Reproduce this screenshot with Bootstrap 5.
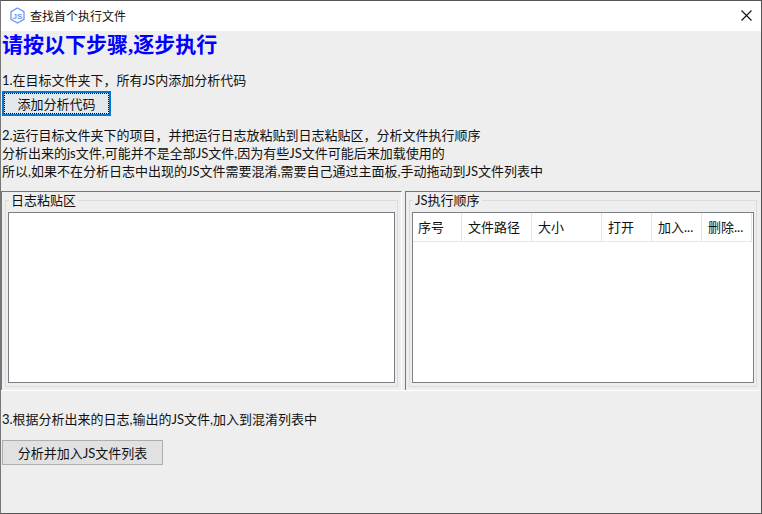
<!DOCTYPE html>
<html lang="zh"><head><meta charset="utf-8"><title>查找首个执行文件</title>
<link href="https://cdn.jsdelivr.net/npm/bootstrap@5.3.0/dist/css/bootstrap.min.css" rel="stylesheet">
<style>
html,body{height:100%;margin:0}
body{font:13px/18px Lato,"Noto Sans CJK SC",sans-serif;color:#111;background:#eee;overflow:hidden}
.win{width:762px;height:514px;border:1px solid #555;border-left-color:#777;display:flex;flex-direction:column}
.tbar{height:30px;background:#fff;font-size:12px;padding-left:9px;flex:none}
.tbar svg{flex:none;margin-top:-2px}
.ttl{margin-left:5px;font-family:"Noto Sans CJK SC",sans-serif}
.xbtn{width:30px;background:none;border:0;padding:0}
.body{flex:1;display:flex;flex-direction:column;padding-left:1px}
.hd{font:700 21px/24px "Liberation Serif","Noto Sans CJK SC",serif;color:#00f;margin:2px 0 0 0}
.ln{margin:0}
.l1{margin-top:14px}
.l2{margin-top:10px}
.l3{margin-top:19px}
.b1{width:109px;height:25px;margin:2px 0 0 0;padding:0;border:2px solid #0078d7;background:#e3e8ec;font-size:13px;line-height:16px;color:#111;border-radius:0;outline:1px dotted #000;outline-offset:-3px}
.split{height:200px;margin:11px 0 0 -1px;display:flex;border-bottom:1px solid #fff;flex:none}
.pane{border-top:1px solid #777;border-left:1px solid #777;padding:8px 3px 3px 3px;display:flex}
.pl{width:401px;border-right:1px solid #fff}
.pr{flex:1;margin-left:3px;margin-right:1px}
.gb{flex:1;border:1px solid #dcdcdc;position:relative;padding:11px 2px 3px 2px;display:flex}
.gb>span{position:absolute;left:3px;top:-9px;background:#eee;padding:0 2px;line-height:16px}
.box{flex:1;border:1px solid #7a7f85;background:#fff}
.hdr{display:flex;height:29px;margin-right:1px}
.hdr div{border-right:1px solid #e5e5e5;border-bottom:1px solid #e5e5e5;padding:0 0 0 6px;line-height:28px;white-space:nowrap}
.hdr .c49{width:49px;padding-left:5px}.c70{width:70px}.c50{width:50px}
.b2{width:161px;height:25px;margin:12px 0 0 0;padding:0;background:#e1e1e1;border:1px solid #adadad;font-size:13px;line-height:16px;color:#111;border-radius:0}
</style></head><body>
<div class="win">
<div class="tbar d-flex align-items-center">
<svg width="15" height="17" viewBox="0 0 15 17"><path d="M7.5 1 14 4.7v7.6L7.5 16 1 12.3V4.7z" fill="#fff" stroke="#6f96f2" stroke-width="1.3"/><text x="7.5" y="11.5" font-size="8" font-family="Liberation Sans" font-weight="700" text-anchor="middle" fill="#6f96f2">JS</text></svg>
<span class="ttl">查找首个执行文件</span>
<button class="xbtn ms-auto d-flex justify-content-center" aria-label="关闭"><svg width="11" height="11" viewBox="0 0 11 11"><path d="M.5.5l10 10M10.5.5l-10 10" stroke="#111" stroke-width="1.1"/></svg></button>
</div>
<div class="body">
<div class="hd">请按以下步骤,逐步执行</div>
<p class="ln l1">1.在目标文件夹下，所有JS内添加分析代码</p>
<button class="b1 btn">添加分析代码</button>
<p class="ln l2">2.运行目标文件夹下的项目，并把运行日志放粘贴到日志粘贴区，分析文件执行顺序</p>
<p class="ln">分析出来的js文件,可能并不是全部JS文件,因为有些JS文件可能后来加载使用的</p>
<p class="ln">所以,如果不在分析日志中出现的JS文件需要混淆,需要自己通过主面板,手动拖动到JS文件列表中</p>
<div class="split">
<div class="pane pl"><div class="gb"><span>日志粘贴区</span><div class="box"></div></div></div>
<div class="pane pr"><div class="gb"><span>JS执行顺序</span><div class="box">
<div class="hdr"><div class="c49">序号</div><div class="c70">文件路径</div><div class="c70">大小</div><div class="c50">打开</div><div class="c50">加入...</div><div class="c50">删除...</div></div>
</div></div></div>
</div>
<p class="ln l3">3.根据分析出来的日志,输出的JS文件,加入到混淆列表中</p>
<button class="b2 btn">分析并加入JS文件列表</button>
</div>
</div>
</body></html>
